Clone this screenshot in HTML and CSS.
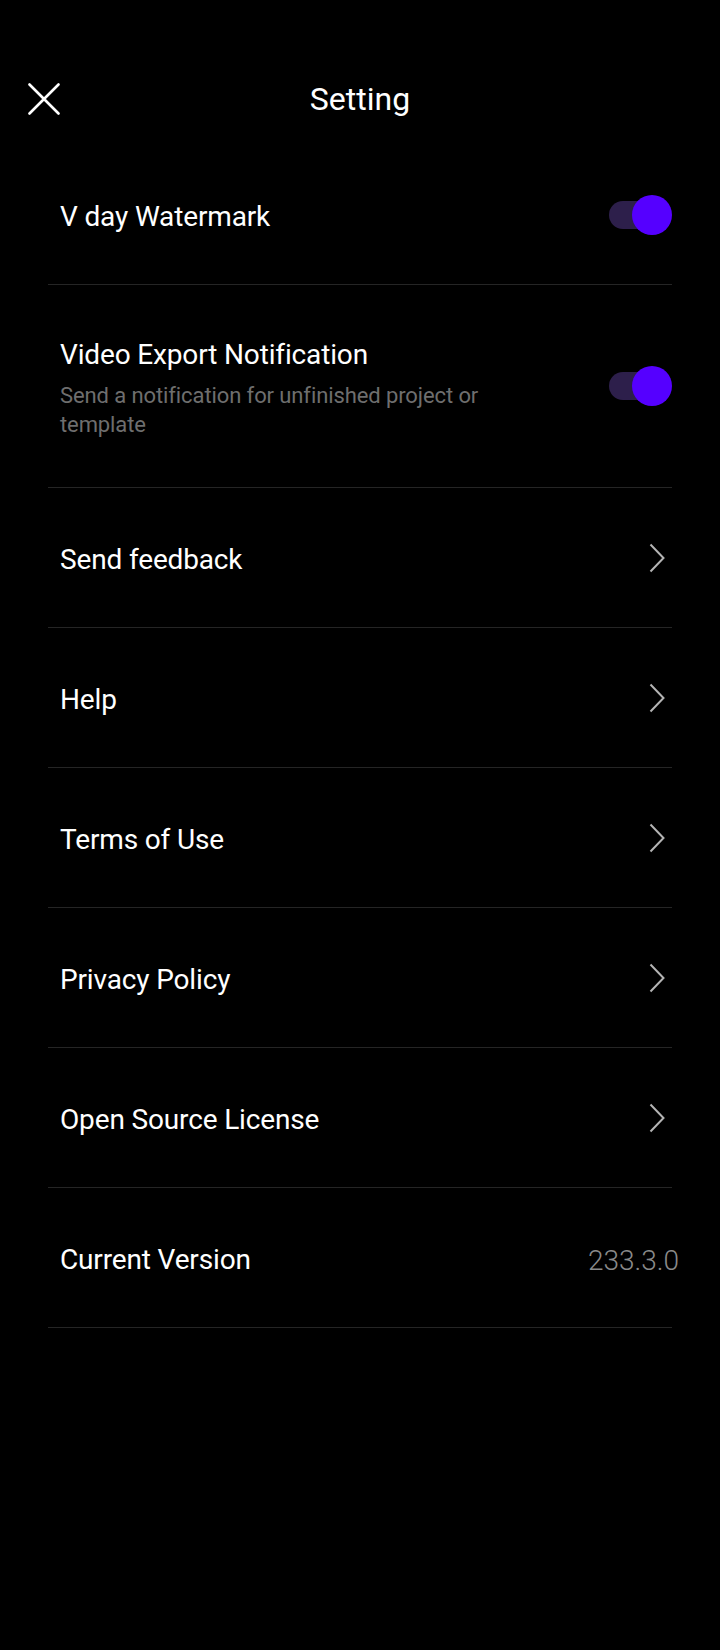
FILE: index.html
```html
<!DOCTYPE html>
<html lang="en">
<head>
  <meta charset="UTF-8">
  <meta name="viewport" content="width=device-width, initial-scale=1.0">
  <title>Setting</title>
  <link rel="stylesheet" href="styles.css">
</head>
<body>
  <header class="topbar">
    <button class="close-btn" aria-label="Close">
      <svg width="32" height="32" viewBox="0 0 32 32">
        <path d="M1.5 1.5 L30.5 30.5 M30.5 1.5 L1.5 30.5" stroke="#fff" stroke-width="2.6" stroke-linecap="round" fill="none"/>
      </svg>
    </button>
    <h1 class="title">Setting</h1>
    <span></span>
  </header>

  <div class="list">
    <div class="row">
      <div class="label">V day Watermark</div>
      <div class="toggle on"></div>
    </div>

    <div class="row tall">
      <div class="label">
        Video Export Notification
        <div class="sub">Send a notification for unfinished project or template</div>
      </div>
      <div class="toggle on"></div>
    </div>

    <div class="row">
      <div class="label">Send feedback</div>
      <svg class="chevron" width="16" height="30" viewBox="0 0 16 30"><polyline points="1.5,1.5 14.5,15 1.5,28.5" fill="none" stroke="#b4b4b4" stroke-width="2"/></svg>
    </div>

    <div class="row">
      <div class="label">Help</div>
      <svg class="chevron" width="16" height="30" viewBox="0 0 16 30"><polyline points="1.5,1.5 14.5,15 1.5,28.5" fill="none" stroke="#b4b4b4" stroke-width="2"/></svg>
    </div>

    <div class="row">
      <div class="label">Terms of Use</div>
      <svg class="chevron" width="16" height="30" viewBox="0 0 16 30"><polyline points="1.5,1.5 14.5,15 1.5,28.5" fill="none" stroke="#b4b4b4" stroke-width="2"/></svg>
    </div>

    <div class="row">
      <div class="label">Privacy Policy</div>
      <svg class="chevron" width="16" height="30" viewBox="0 0 16 30"><polyline points="1.5,1.5 14.5,15 1.5,28.5" fill="none" stroke="#b4b4b4" stroke-width="2"/></svg>
    </div>

    <div class="row">
      <div class="label">Open Source License</div>
      <svg class="chevron" width="16" height="30" viewBox="0 0 16 30"><polyline points="1.5,1.5 14.5,15 1.5,28.5" fill="none" stroke="#b4b4b4" stroke-width="2"/></svg>
    </div>

    <div class="row">
      <div class="label">Current Version</div>
      <div class="version">233.3.0</div>
    </div>
  </div>
</body>
</html>
```

FILE: styles.css
```css
body {
  margin: 0;
  background-color: #000;
  color: #fff;
  font-family: Roboto, "Noto Sans", sans-serif;
}
.topbar {
  display: grid;
  grid-template-columns: 32px 1fr 32px;
  align-items: center;
  height: 64px;
  padding: 67px 28px 14px;
}
.close-btn {
  width: 32px;
  height: 32px;
  padding: 0;
  border: none;
  background: none;
  display: block;
}
.close-btn svg {
  display: block;
}
.title {
  margin: 0;
  text-align: center;
  font-size: 32px;
  font-weight: 400;
  line-height: 64px;
}
.list {
  margin: 0 48px;
}
.row {
  display: flex;
  align-items: center;
  justify-content: space-between;
  box-sizing: border-box;
  height: 140px;
  padding: 0 7px 0 12px;
  border-bottom: 1px solid #252525;
}
.row.tall {
  height: 203px;
  padding-right: 0;
}
.row:first-child {
  padding-right: 0;
}
.label {
  font-size: 28px;
  line-height: 34px;
  letter-spacing: -0.15px;
  padding-top: 5px;
}
.sub {
  max-width: 460px;
  margin-top: 9px;
  font-size: 22px;
  line-height: 29px;
  letter-spacing: -0.1px;
  color: #6e6e6e;
}
.toggle {
  position: relative;
  width: 65px;
  height: 40px;
}
.toggle::before {
  content: "";
  position: absolute;
  left: 2px;
  top: 6px;
  width: 50px;
  height: 28px;
  border-radius: 14px;
  background-color: #2d1f4b;
}
.toggle::after {
  content: "";
  position: absolute;
  right: 0;
  top: 0;
  width: 40px;
  height: 40px;
  border-radius: 50%;
  background-color: #5500ff;
}
.chevron {
  display: block;
}
.version {
  margin-right: -14px;
  padding-top: 5px;
  font-size: 28px;
  font-weight: 300;
  color: #8a8a8a;
}
```
